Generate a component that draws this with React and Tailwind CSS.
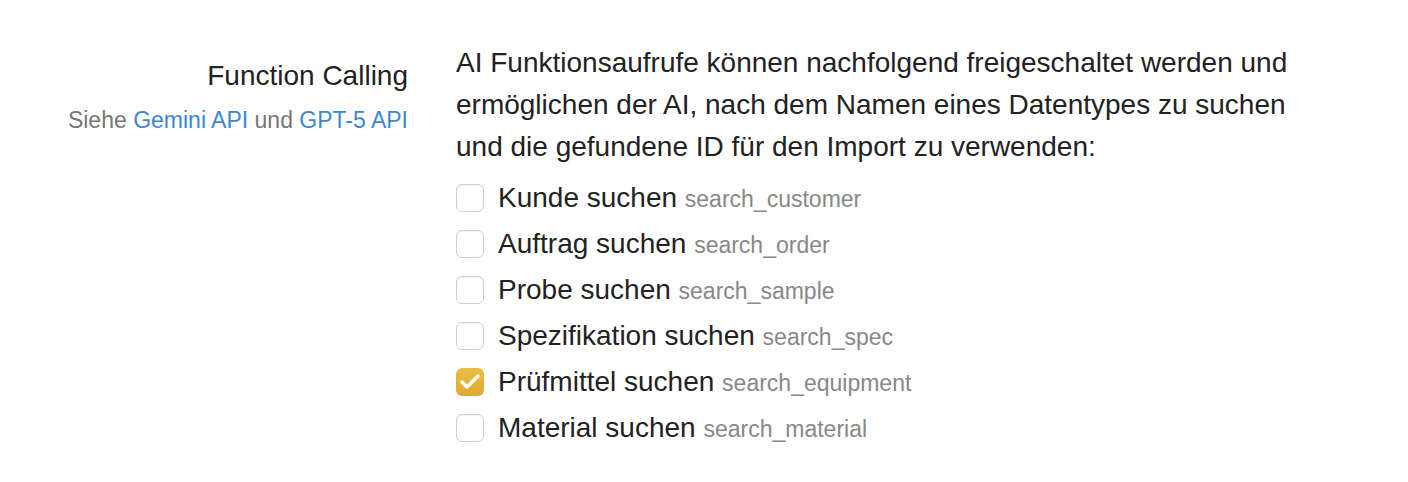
import { Check } from 'lucide-react';

const functions = [
  { label: 'Kunde suchen', code: 'search_customer', checked: false },
  { label: 'Auftrag suchen', code: 'search_order', checked: false },
  { label: 'Probe suchen', code: 'search_sample', checked: false },
  { label: 'Spezifikation suchen', code: 'search_spec', checked: false },
  { label: 'Prüfmittel suchen', code: 'search_equipment', checked: true },
  { label: 'Material suchen', code: 'search_material', checked: false }
];

const Box = ({ checked }) =>
  checked ? (
    <span className="grid h-[28px] w-[28px] shrink-0 place-items-center rounded-[6px] bg-gradient-to-b from-[#ecbd45] to-[#dfab2f]">
      <Check size={24} strokeWidth={3.5} className="text-white" />
    </span>
  ) : (
    <span className="h-[28px] w-[28px] shrink-0 rounded-[6px] border border-[#cfcfcf] bg-white shadow-[inset_0_1px_1px_rgba(0,0,0,0.05)]" />
  );

export default function App() {
  return (
    <div className="min-h-[482px] bg-white pt-[42px] font-['Liberation_Sans',Arial,sans-serif] text-[#222]">
      <div className="flex">
        <div className="w-[408px] pt-[17px] text-right">
          <p className="text-[28px] leading-[34px]">Function Calling</p>
          <p className="mt-[13px] text-[23px] leading-[28px] text-[#777]">
            Siehe <a className="text-[#3b88cf]">Gemini API</a> und <a className="text-[#3b88cf]">GPT-5 API</a>
          </p>
        </div>
        <div className="ml-[48px] w-[862px]">
          <p className="text-[28px] leading-[42px]">
            AI Funktionsaufrufe können nachfolgend freigeschaltet werden und ermöglichen der AI, nach dem Namen eines
            Datentypes zu suchen und die gefundene ID für den Import zu verwenden:
          </p>
          <ul className="mt-[7px]">
            {functions.map(({ label, code, checked }) => (
              <li key={code} className="flex h-[46px] items-center gap-[14px]">
                <Box checked={checked} />
                <span className="text-[28px]">
                  {label} <span className="text-[23px] text-[#888]">{code}</span>
                </span>
              </li>
            ))}
          </ul>
        </div>
      </div>
    </div>
  );
}
